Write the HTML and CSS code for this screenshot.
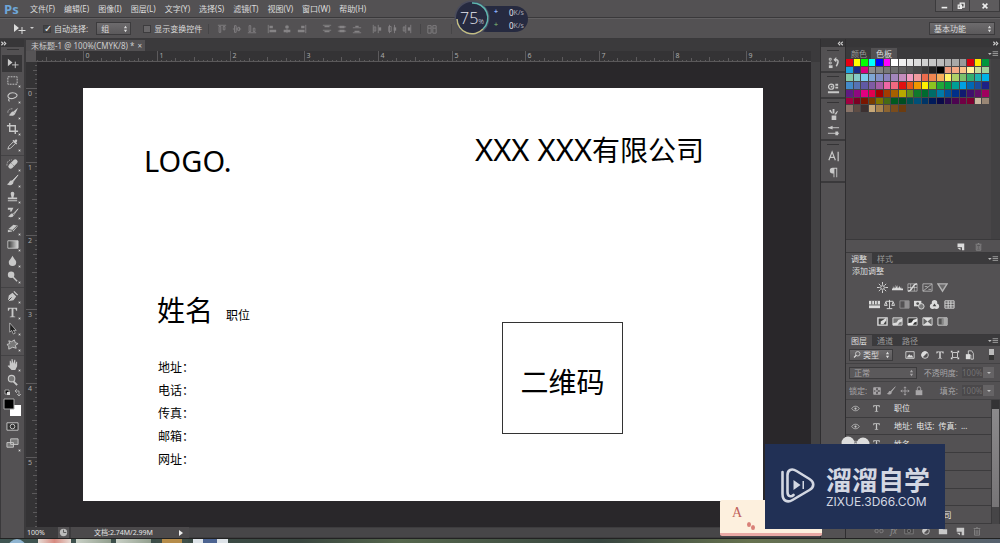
FILE: index.html
```html
<!DOCTYPE html>
<html lang="zh-CN">
<head>
<meta charset="utf-8">
<title>未标题-1 @ 100%(CMYK/8)</title>
<link rel="stylesheet" href="styles.css">
</head>
<body>
<svg class="defs" aria-hidden="true">
  <symbol id="move" viewBox="0 0 14 14"><path d="M2 2v8l5-4z" fill="currentColor"/><path d="M10 5v7M6.500 8.500h7" stroke="currentColor"/></symbol>
  <symbol id="marquee" viewBox="0 0 14 14"><path d="M2 3h10v8H2z" fill="none" stroke="currentColor" stroke-dasharray="2 1"/></symbol>
  <symbol id="lasso" viewBox="0 0 14 14"><path d="M4 9C0 7 3 3 7 3s7 3 3 5-6 1-6 1c-2 1-1 3 0 3" fill="none" stroke="currentColor" stroke-width="1.200"/></symbol>
  <symbol id="quick" viewBox="0 0 14 14"><path d="M13 2 8 6l2 2z" fill="currentColor"/><path d="M8 6c-3 0-3 3-5 4 3 1 6 1 7-2z" fill="currentColor"/><path d="M2 7c0-3 2-4 5-4" fill="none" stroke="currentColor" stroke-dasharray="1 1"/></symbol>
  <symbol id="crop" viewBox="0 0 14 14"><path d="M4 1v9h9M1 4h9v9" fill="none" stroke="currentColor" stroke-width="1.500"/></symbol>
  <symbol id="dropper" viewBox="0 0 14 14"><path d="m2 12 1-3 5-5 2 2-5 5z" fill="none" stroke="currentColor"/><path d="m7 3 4 4 1-1-1-1c2-2 1-4-1-3L9 3 8 2z" fill="currentColor"/></symbol>
  <symbol id="heal" viewBox="0 0 14 14"><path d="m5 9 5-5" stroke="currentColor" stroke-width="5" stroke-linecap="round"/><path d="m6 6 3 3" stroke="#555" stroke-dasharray="1 1"/><path d="M1 8c0-4 2-6 5-6" fill="none" stroke="currentColor" stroke-dasharray="1 1"/></symbol>
  <symbol id="brush" viewBox="0 0 14 14"><path d="M13 1 6 8l1 1z" fill="currentColor" stroke="currentColor"/><path d="M6 7c-3 0-2 3-5 4 3 2 7 1 7-2z" fill="currentColor"/></symbol>
  <symbol id="stamp" viewBox="0 0 14 14"><path d="M5 4a2 2 0 0 1 4 0L8 8h4v2H2V8h4zM2 11h10v1H2z" fill="currentColor"/></symbol>
  <symbol id="history" viewBox="0 0 14 14"><path d="M13 3 7 9l1 1z" stroke="currentColor"/><path d="M7 8c-3 0-3 3-5 3 3 2 6 1 6-1zM2 2h6L6 6H4l1-2H2z" fill="currentColor"/></symbol>
  <symbol id="eraser" viewBox="0 0 14 14"><path d="m2 8 6-5 5 1-5 6-6 1z" fill="currentColor"/><path d="m2 8 5 1 5-5M7 9v2" fill="none" stroke="#555"/></symbol>
  <symbol id="gradient" viewBox="0 0 14 14"><linearGradient id="g"><stop stop-color="#333"/><stop offset="1" stop-color="#ddd"/></linearGradient><path d="M2 3h11v8H2z" fill="url(#g)" stroke="currentColor"/></symbol>
  <symbol id="drop" viewBox="0 0 14 14"><path d="M7 2c2 4 4 5 4 7a4 4 0 0 1-8 0c0-2 2-3 4-7z" fill="currentColor"/></symbol>
  <symbol id="dodge" viewBox="0 0 14 14"><circle cx="5.500" cy="5" r="3.500" fill="currentColor"/><path d="m7 7 5 5" stroke="currentColor" stroke-width="1.500"/></symbol>
  <symbol id="pen" viewBox="0 0 14 14"><path d="m2 12 1-6 4-3 4 4-3 4zM8 2l1-1 4 4-1 1z" fill="currentColor"/><path d="m2 12 4-4" stroke="#444"/></symbol>
  <symbol id="type" viewBox="0 0 14 14"><path d="M2 2h10v3h-1L10 3H8v8l2 .5v.5H4v-.5L6 11V3H4L3 5H2z" fill="currentColor"/></symbol>
  <symbol id="arrow" viewBox="0 0 14 14"><path d="M4 1v10l2-2 2 4 2-1-2-3h3z" fill="#222" stroke="currentColor" stroke-width=".8"/></symbol>
  <symbol id="shape" viewBox="0 0 14 14"><path d="m3 3 3 1 3-2 1 3 3 1-3 2 1 3-4-1-4 2V9L1 7l3-1z" fill="#777" stroke="currentColor"/></symbol>
  <symbol id="hand" viewBox="0 0 14 14"><path d="M4 8V3h1l1 3V1h1l1 5 1-4h1v5l1-3h1v5l-2 4H6L2 9V8z" fill="currentColor"/></symbol>
  <symbol id="zoomer" viewBox="0 0 14 14"><circle cx="6" cy="5" r="3.500" fill="#777" stroke="currentColor" stroke-width="1.200"/><path d="m8 8 4 4" stroke="currentColor" stroke-width="2"/></symbol>
  <symbol id="mask" viewBox="0 0 14 14"><path d="M1 3h12v8H1z" fill="#333" stroke="currentColor"/><circle cx="7" cy="7" r="2.500" fill="none" stroke="currentColor"/></symbol>
  <symbol id="screen" viewBox="0 0 14 14"><path d="M5 2h8v6H5zM1 6h7v5H1z" fill="#777" stroke="currentColor"/></symbol>
  <symbol id="al-top" viewBox="0 0 12 12"><path d="M1 1.500h10M2.500 3v7h2V3zM7.500 3v4h2V3z" fill="none" stroke="currentColor"/></symbol>
  <symbol id="al-mid" viewBox="0 0 12 12"><path d="M1 6h2M5 6h2M9 6h2M3 2v8h2V2zM7 4v4h2V4z" fill="none" stroke="currentColor"/></symbol>
  <symbol id="al-bot" viewBox="0 0 12 12"><path d="M1 10.500h10M2.500 2v7h2V2zM7.500 5v4h2V5z" fill="none" stroke="currentColor"/></symbol>
  <symbol id="al-l" viewBox="0 0 12 12"><path d="M1.500 1v10" stroke="currentColor"/><path d="M3 2h4v3H3zM3 7h8v3H3z" fill="currentColor"/></symbol>
  <symbol id="al-c" viewBox="0 0 12 12"><path d="M6 1v10" stroke="currentColor"/><path d="M4 2h4v3H4zM2 7h8v3H2z" fill="currentColor"/></symbol>
  <symbol id="al-r" viewBox="0 0 12 12"><path d="M10.500 1v10" stroke="currentColor"/><path d="M5 2h4v3H5zM1 7h8v3H1z" fill="currentColor"/></symbol>
  <symbol id="di-t" viewBox="0 0 12 12"><path d="M1 1.500h10M1 7.500h10" stroke="currentColor"/><path d="M3 2h6v2H3zM3 8h6v2H3z" fill="currentColor"/></symbol>
  <symbol id="di-m" viewBox="0 0 12 12"><path d="M1 3.500h10M1 8.500h10" stroke="currentColor"/><path d="M3 2h6v3H3zM3 7h6v3H3z" fill="currentColor"/></symbol>
  <symbol id="di-b" viewBox="0 0 12 12"><path d="M1 4.500h10M1 10.500h10" stroke="currentColor"/><path d="M4 2h4v2H4zM3 8h6v2H3z" fill="currentColor"/></symbol>
  <symbol id="di-l" viewBox="0 0 12 12"><path d="M1.500 1v10M7.500 1v10" stroke="currentColor"/><path d="M2.500 3.500h2v5h-2z" fill="none" stroke="currentColor"/><path d="M8 4h3v4H8z" fill="currentColor"/></symbol>
  <symbol id="di-c" viewBox="0 0 12 12"><path d="M3 1v10M9 1v10" stroke="currentColor"/><path d="M2 3h3v6H2z" fill="none" stroke="currentColor"/><path d="M8 4h3v4H8z" fill="currentColor"/></symbol>
  <symbol id="di-r" viewBox="0 0 12 12"><path d="M4.500 1v10M10.500 1v10" stroke="currentColor"/><path d="M1.500 3.500h2v5h-2z" fill="none" stroke="currentColor"/><path d="M7 4h3v4H7z" fill="currentColor"/></symbol>
  <symbol id="auto" viewBox="0 0 12 12"><path d="M1 2h4v3H1zM7 2h4v3H7zM1 5v6h4V5M7 5v6h4V5" fill="none" stroke="currentColor"/></symbol>
  <symbol id="menu" viewBox="0 0 12 8"><path d="M0 3h4L2 5z" fill="currentColor"/><path d="M5 1.500h6M5 3.500h6M5 5.500h6" stroke="currentColor" stroke-width=".8"/></symbol>
  <symbol id="right2" viewBox="0 0 8 8"><path d="m1 2 2 2-2 2M4 2l2 2-2 2" fill="none" stroke="currentColor" stroke-width="1.300"/></symbol>
  <symbol id="left2" viewBox="0 0 8 8"><path d="M3 2 1 4l2 2M6 2 4 4l2 2" fill="none" stroke="currentColor" stroke-width="1.300"/></symbol>
  <symbol id="hist-p" viewBox="0 0 14 14"><path d="M2.500 2.500h2v2h-2zM2.500 6.500h2v2h-2z" fill="none" stroke="currentColor"/><path d="M2 10h4v3H2z" fill="currentColor"/><path d="M8 4h2c3 0 2 4 0 7" fill="none" stroke="currentColor" stroke-width="1.600"/><path d="M7 4l3-3v6z" fill="currentColor"/></symbol>
  <symbol id="props" viewBox="0 0 14 14"><circle cx="4.500" cy="5" r="2.800" fill="none" stroke="currentColor" stroke-width="1.300"/><path d="M4 4h2v2H4zM9 2h3v2H9zM9 5h3v2H9zM1 10h12v2H1z" fill="currentColor"/></symbol>
  <symbol id="brushes" viewBox="0 0 14 14"><path d="M5 8h5v5H5zM6 1h2v5H6zM2 3l2-1 2 4H5zM12 3l-2 1-2 3h2z" fill="currentColor"/></symbol>
  <symbol id="presets" viewBox="0 0 14 14"><path d="M1 4h12M1 10h12" stroke="currentColor"/><path d="m1 4 5-2v4zM9 8h3v4H9z" fill="currentColor"/></symbol>
  <symbol id="chars" viewBox="0 0 14 14"><path d="m2 11 3.500-9L9 11M3 8h5M12 2v10" fill="none" stroke="currentColor" stroke-width="1.300"/></symbol>
  <symbol id="para" viewBox="0 0 14 14"><path d="M6 8a3 3 0 0 1 0-6h5v10h-1V3H8v9H7V8z" fill="currentColor"/></symbol>
  <symbol id="new" viewBox="0 0 12 12"><path d="M2 2h9v9H8V7H2z" fill="currentColor"/><path d="m2 8 4 0v3z" fill="currentColor"/></symbol>
  <symbol id="trash" viewBox="0 0 12 12"><path d="M2 3h8M5 2h2M3 4v7h6V4M5 5v5M7 5v5" fill="none" stroke="currentColor"/></symbol>
  <symbol id="sun" viewBox="0 0 12 12"><circle cx="6" cy="6" r="2" fill="none" stroke="currentColor"/><path d="M6 0v3M6 9v3M0 6h3M9 6h3M2 2l2 2M8 8l2 2M10 2 8 4M4 8l-2 2" stroke="currentColor"/></symbol>
  <symbol id="levels" viewBox="0 0 12 12"><path d="M0 9V7l1 0V5l1 2V4l1 3 1-1V3l2 4V3l1 4 1-3 1 3 1-2v2l2 0v2z" fill="currentColor"/></symbol>
  <symbol id="curves" viewBox="0 0 12 12"><path d="M1 2h10v8H1zM1 6h10M4 2v8M8 2v8" fill="none" stroke="currentColor" stroke-width=".6"/><path d="M1 10c6 0 4-8 10-8" fill="none" stroke="currentColor" stroke-width="1.500"/></symbol>
  <symbol id="expo" viewBox="0 0 12 12"><path d="M1 2h10v8H1zM1 10l10-8M3 5h3M7 8h3" fill="none" stroke="currentColor"/></symbol>
  <symbol id="vib" viewBox="0 0 12 12"><path d="M1 2h10l-5 8z" fill="#777" stroke="currentColor" stroke-width="1.500"/></symbol>
  <symbol id="hue" viewBox="0 0 12 12"><path d="M0 2h12v8H0z" fill="currentColor"/><path d="M3 2v4M6 2v4M9 2v4M0 6.500h12" stroke="#555"/></symbol>
  <symbol id="scale" viewBox="0 0 12 12"><path d="M6 1v9M3 10.500h6M2 2.500h8M2 3 .5 7h3zM10 3 8.500 7h3z" fill="none" stroke="currentColor"/></symbol>
  <symbol id="bw" viewBox="0 0 12 12"><path d="M1 2h10v8H1z" fill="none" stroke="currentColor"/><path d="M6 2h5v8H6z" fill="currentColor"/></symbol>
  <symbol id="photo" viewBox="0 0 12 12"><path d="M0 2h8v6H0z" fill="currentColor"/><circle cx="8" cy="8" r="3" fill="#777" stroke="currentColor"/><circle cx="4" cy="5" r="1.500" fill="#555"/></symbol>
  <symbol id="mixer" viewBox="0 0 12 12"><circle cx="6" cy="4" r="3" fill="currentColor"/><circle cx="4" cy="8" r="3" fill="currentColor"/><circle cx="8" cy="8" r="3" fill="currentColor"/><path d="m6 5 2 3H4z" fill="#444"/></symbol>
  <symbol id="lut" viewBox="0 0 12 12"><path d="M1 2h10v8H1zM1 4.500h10M1 7.500h10M4.500 2v8M7.500 2v8" fill="none" stroke="currentColor"/></symbol>
  <symbol id="inv" viewBox="0 0 12 12"><path d="M1 2h10v8H1z" fill="#444" stroke="currentColor" stroke-width="1.500"/><path d="M4 9V6l3-2 3-2v3L7 9z" fill="currentColor"/></symbol>
  <symbol id="post" viewBox="0 0 12 12"><path d="M1 2h10v8H1z" fill="#777" stroke="currentColor"/><path d="m1 8 4-1 2-3 4-1v3L8 7l-2 3H1z" fill="currentColor"/></symbol>
  <symbol id="thresh" viewBox="0 0 12 12"><path d="M1 2h10v8H1z" fill="#333" stroke="currentColor"/><path d="m1 8 4-1 2-3 4-1v3L8 7l-2 3H1z" fill="#eee"/></symbol>
  <symbol id="sel" viewBox="0 0 12 12"><path d="M1 2h10v8H1z" fill="#666" stroke="currentColor"/><path d="m1 2 5 4 5-4M1 10l5-4 5 4z" fill="currentColor"/></symbol>
  <symbol id="gmap" viewBox="0 0 12 12"><path d="M1 2h10v8H1z" fill="#555" stroke="currentColor"/><path d="M5 2h2v8H5z" fill="#888"/><path d="M7 2h4v8H7z" fill="#aaa"/></symbol>
  <symbol id="pic" viewBox="0 0 12 12"><path d="M1 2h10v8H1z" fill="none" stroke="currentColor"/><path d="m2 9 3-4 2 2 1-1 2 3z" fill="currentColor"/></symbol>
  <symbol id="half" viewBox="0 0 12 12"><circle cx="6" cy="6" r="4" fill="none" stroke="currentColor"/><path d="M9 3a4 4 0 0 0-6 6z" fill="currentColor"/></symbol>
  <symbol id="frame" viewBox="0 0 12 12"><path d="M3 3h6v6H3z" fill="none" stroke="currentColor"/><path d="M1 1h2v2H1zM9 1h2v2H9zM1 9h2v2H1zM9 9h2v2H9z" fill="currentColor"/></symbol>
  <symbol id="smart" viewBox="0 0 12 12"><path d="M4 1h4l2 3v7H7V6H4z" fill="none" stroke="currentColor"/><path d="M1 5h5v6H1z" fill="currentColor"/></symbol>
  <symbol id="checker" viewBox="0 0 12 12"><path d="M2 2h8v8H2z" fill="none" stroke="currentColor"/><path d="M2 2h3v3H2zM7 2h3v3H7zM4 5h3v2H4zM2 7h3v3H2zM7 7h3v3H7z" fill="currentColor"/></symbol>
  <symbol id="lock" viewBox="0 0 12 12"><path d="M2 5h8v6H2z" fill="currentColor"/><path d="M4 5V3a2 2 0 0 1 4 0v2" fill="none" stroke="currentColor"/></symbol>
  <symbol id="cross" viewBox="0 0 12 12"><path d="M6 1v10M1 6h10M4.500 2.500 6 1l1.500 1.500M4.500 9.500 6 11l1.500-1.500M2.500 4.500 1 6l1.500 1.500M9.500 4.500 11 6 9.500 7.500" fill="none" stroke="currentColor"/></symbol>
  <symbol id="eye" viewBox="0 0 12 12"><path d="M1 6c2-4 8-4 10 0-2 4-8 4-10 0z" fill="none" stroke="currentColor"/><circle cx="6" cy="6" r="1.500" fill="currentColor"/></symbol>
  <symbol id="link" viewBox="0 0 12 12"><path d="M5 4H3a2 2 0 0 0 0 4h2M7 4h2a2 2 0 0 1 0 4H7M4 6h4" fill="none" stroke="currentColor"/></symbol>
  <symbol id="folder" viewBox="0 0 12 12"><path d="M1 3h4l1 1h5v6H1z" fill="currentColor"/></symbol>
  <symbol id="lens" viewBox="0 0 12 12"><circle cx="7" cy="5" r="3" fill="none" stroke="currentColor"/><path d="m5 7-3 3" stroke="currentColor" stroke-width="1.500"/></symbol>
  <symbol id="ud" viewBox="0 0 6 10"><path d="m1 4 2-3 2 3zM1 6l2 3 2-3z" fill="currentColor"/></symbol>
</svg>

<div class="app">
  <header class="menubar">
    <span class="logo">Ps</span>
    <nav class="menus">
      <button>文件(F)</button><button>编辑(E)</button><button>图像(I)</button><button>图层(L)</button><button>文字(Y)</button><button>选择(S)</button><button>滤镜(T)</button><button>视图(V)</button><button>窗口(W)</button><button>帮助(H)</button>
    </nav>
    <div class="window-buttons">
      <button aria-label="最小化"><svg viewBox="0 0 10 10"><path d="M2 7h7" stroke="currentColor" stroke-width="2"/></svg></button>
      <button aria-label="还原"><svg viewBox="0 0 10 10"><path d="M4 1.500h5v5H4zM1.500 4h4v4h-4z" fill="#555" stroke="currentColor" stroke-width="1.500"/></svg></button>
      <button class="close" aria-label="关闭"><svg viewBox="0 0 10 10"><path d="m2 2 6 6M8 2 2 8" stroke="currentColor" stroke-width="2"/></svg></button>
    </div>
  </header>

  <div class="options">
    <span class="current"><svg class="i14"><use href="#move"/></svg><i class="caret"></i></span>
    <label class="check"><input type="checkbox" checked>自动选择:</label>
    <span class="pick group"><select aria-label="自动选择"><option>组</option></select><svg><use href="#ud"/></svg></span>
    <label class="check"><input type="checkbox">显示变换控件</label>
    <div class="aligns">
      <span><svg><use href="#al-top"/></svg><svg><use href="#al-mid"/></svg><svg><use href="#al-bot"/></svg></span>
      <span><svg><use href="#al-l"/></svg><svg><use href="#al-c"/></svg><svg><use href="#al-r"/></svg></span>
      <span class="apart"><svg><use href="#di-t"/></svg><svg><use href="#di-m"/></svg><svg><use href="#di-b"/></svg></span>
      <span><svg><use href="#di-l"/></svg><svg><use href="#di-c"/></svg><svg><use href="#di-r"/></svg></span>
      <span><svg><use href="#auto"/></svg></span>
    </div>
    <span class="pick workspace"><select aria-label="工作区"><option>基本功能</option></select><svg><use href="#ud"/></svg></span>
  </div>

  <main class="main">
    <aside class="tools">
      <div class="strip-head left"><svg><use href="#right2"/></svg></div>
      <i class="grip"></i>
      <div class="tool-group">
        <button class="active" aria-label="移动"><svg><use href="#move"/></svg></button>
        <button aria-label="选框"><svg><use href="#marquee"/></svg></button>
        <button aria-label="套索"><svg><use href="#lasso"/></svg></button>
        <button aria-label="快速选择"><svg><use href="#quick"/></svg></button>
        <button aria-label="裁剪"><svg><use href="#crop"/></svg></button>
        <button aria-label="吸管"><svg><use href="#dropper"/></svg></button>
      </div>
      <div class="tool-group">
        <button aria-label="修复"><svg><use href="#heal"/></svg></button>
        <button aria-label="画笔"><svg><use href="#brush"/></svg></button>
        <button aria-label="图章"><svg><use href="#stamp"/></svg></button>
        <button aria-label="历史画笔"><svg><use href="#history"/></svg></button>
        <button aria-label="橡皮擦"><svg><use href="#eraser"/></svg></button>
        <button aria-label="渐变"><svg><use href="#gradient"/></svg></button>
        <button aria-label="模糊"><svg><use href="#drop"/></svg></button>
        <button aria-label="减淡"><svg><use href="#dodge"/></svg></button>
      </div>
      <div class="tool-group">
        <button aria-label="钢笔"><svg><use href="#pen"/></svg></button>
        <button aria-label="文字"><svg><use href="#type"/></svg></button>
        <button aria-label="路径选择"><svg><use href="#arrow"/></svg></button>
        <button aria-label="形状"><svg><use href="#shape"/></svg></button>
      </div>
      <div class="tool-group last">
        <button aria-label="抓手"><svg><use href="#hand"/></svg></button>
        <button class="single" aria-label="缩放"><svg><use href="#zoomer"/></svg></button>
      </div>
      <svg class="colors" viewBox="0 0 20 30"><path d="M3 2h4v4H3z" fill="#111" stroke="#bbb" stroke-width=".8"/><path d="M5 4h3v3H5z" fill="#ddd"/><path d="M13 3h4v5M13 3l2-2M13 3l2 2M17 8l-2-2M17 8l2-2" fill="none" stroke="#bbb" stroke-width=".8"/><path d="M8 17h11v11H8z" fill="#fff"/><path d="M2 11h10v10H2z" fill="#000" stroke="#aaa"/></svg>
      <button class="single wide" aria-label="快速蒙版"><svg><use href="#mask"/></svg></button>
      <button class="wide" aria-label="屏幕模式"><svg><use href="#screen"/></svg></button>
    </aside>

    <section class="document">
      <div class="doc-tabs"><div class="doc-tab">未标题-1 @ 100%(CMYK/8) *<button aria-label="关闭文档">×</button></div></div>
      <div class="ruler-row"><i class="corner"></i><svg class="ruler-x" id="ruler-x"></svg></div>
      <div class="view">
        <svg class="ruler-y" id="ruler-y"></svg>
        <div class="canvas">
          <div class="card">
            <span class="t-logo">LOGO.</span>
            <span class="t-company"><span class="latin">XXX XXX</span>有限公司</span>
            <span class="t-name">姓名</span>
            <span class="t-job">职位</span>
            <ul class="t-lines"><li>地址：</li><li>电话：</li><li>传真：</li><li>邮箱：</li><li>网址：</li></ul>
            <div class="t-qr">二维码</div>
          </div>
        </div>
        <i class="scroll-y"></i>
      </div>
      <footer class="status">
        <span class="zoom">100%</span>
        <svg class="status-icon" viewBox="0 0 12 12"><circle cx="6" cy="6" r="4" fill="#bbb"/><path d="M6 3v3h3" fill="none" stroke="#555"/></svg>
        <span class="size">文档:2.74M/2.99M</span><i class="play"></i>
        <i class="scroll-x"></i>
      </footer>
    </section>

    <aside class="dock">
      <div class="strip-head"><svg><use href="#left2"/></svg></div>
      <div class="dock-group"><i class="grip"></i><svg><use href="#hist-p"/></svg></div>
      <div class="dock-group"><i class="grip"></i><svg><use href="#props"/></svg></div>
      <div class="dock-group"><i class="grip"></i><svg><use href="#brushes"/></svg><svg><use href="#presets"/></svg></div>
      <div class="dock-group"><i class="grip"></i><svg><use href="#chars"/></svg><svg><use href="#para"/></svg></div>
    </aside>

    <aside class="panels">
      <div class="strip-head"><svg><use href="#right2"/></svg></div>
      <section class="panel swatch-panel">
        <div class="tabs"><button>颜色</button><button class="on">色板</button><svg><use href="#menu"/></svg></div>
        <div class="swatch-body"><div class="swatches" id="swatches"></div></div>
        <div class="panel-foot"><svg><use href="#new"/></svg><svg class="dim"><use href="#trash"/></svg></div>
      </section>
      <section class="panel">
        <div class="tabs"><button class="on">调整</button><button>样式</button><svg><use href="#menu"/></svg></div>
        <div class="adjust">
          <h2>添加调整</h2>
          <div><svg><use href="#sun"/></svg><svg><use href="#levels"/></svg><svg><use href="#curves"/></svg><svg class="soft"><use href="#expo"/></svg><svg class="soft"><use href="#vib"/></svg></div>
          <div><svg><use href="#hue"/></svg><svg><use href="#scale"/></svg><svg class="dim"><use href="#bw"/></svg><svg><use href="#photo"/></svg><svg><use href="#mixer"/></svg><svg><use href="#lut"/></svg></div>
          <div><svg><use href="#inv"/></svg><svg><use href="#post"/></svg><svg><use href="#thresh"/></svg><svg><use href="#sel"/></svg><svg><use href="#gmap"/></svg></div>
        </div>
      </section>
      <section class="panel layers">
        <div class="tabs"><button class="on">图层</button><button>通道</button><button>路径</button><svg><use href="#menu"/></svg></div>
        <div class="row">
          <span class="pick kind"><svg class="lead"><use href="#lens"/></svg><select aria-label="筛选"><option>类型</option></select><svg><use href="#ud"/></svg></span>
          <div class="filters"><svg><use href="#pic"/></svg><svg><use href="#half"/></svg><svg><use href="#type"/></svg><svg><use href="#frame"/></svg><svg><use href="#smart"/></svg></div>
          <i class="toggle"></i>
        </div>
        <div class="row muted">
          <span class="pick blend"><select aria-label="混合模式"><option>正常</option></select><svg><use href="#ud"/></svg></span>
          <label>不透明度:<input value="100%" disabled></label><i class="drop"></i>
        </div>
        <div class="row muted">
          <span>锁定:</span>
          <div class="locks"><svg><use href="#checker"/></svg><svg><use href="#brush"/></svg><svg><use href="#cross"/></svg><svg><use href="#lock"/></svg></div>
          <label>填充:<input value="100%" disabled></label><i class="drop"></i>
        </div>
        <div class="list-wrap">
          <ul class="list">
            <li><svg><use href="#eye"/></svg><svg class="t"><use href="#type"/></svg><span>职位</span></li>
            <li><svg><use href="#eye"/></svg><svg class="t"><use href="#type"/></svg><span>地址:&nbsp; 电话:&nbsp; 传真:&nbsp; ...</span></li>
            <li><svg><use href="#eye"/></svg><svg class="t"><use href="#type"/></svg><span>姓名</span></li>
            <li></li><li></li><li></li>
            <li><svg><use href="#eye"/></svg><svg class="t"><use href="#type"/></svg><span>XXX XX有限公司</span></li>
          </ul>
          <i class="scroll-l"></i>
        </div>
        <div class="layer-foot"><svg class="dim"><use href="#link"/></svg><em>fx</em><svg class="dim"><use href="#mask"/></svg><svg><use href="#half"/></svg><svg><use href="#folder"/></svg><svg><use href="#new"/></svg><svg class="dim"><use href="#trash"/></svg></div>
      </section>
    </aside>
  </main>
  <div class="taskbar"><i class="orb"></i><i class="task a"></i><i class="task b"></i><i class="task b"></i><i class="task c"></i><i class="task d"></i></div>
</div>

<div class="meter">
  <div class="speeds"><span><b class="up">+</b>0<small>K/s</small></span><span><b class="down">+</b>0<small>K/s</small></span></div>
  <div class="dial">
    <svg viewBox="0 0 36 36"><circle cx="18" cy="18" r="17.500" fill="#4a4c5c"/><circle cx="18" cy="18" r="16" fill="#262a40"/><path d="M18 3a15 15 0 0 1 11 26" fill="none" stroke="#5fb6b0" stroke-width="1.500"/><path d="M29 29A15 15 0 0 1 3 19" fill="none" stroke="#c3bd83" stroke-width="1.500"/></svg>
    <span>75<small>%</small></span>
  </div>
</div>
<div class="ime"><b>A</b><i></i><i></i></div>
<svg class="paws" viewBox="0 0 30 12"><circle cx="7" cy="7" r="6.500" fill="#ddd"/><circle cx="22" cy="8" r="6.500" fill="#ddd"/></svg>
<div class="watermark">
  <svg viewBox="0 0 34 36"><g fill="none" stroke="#d3d7e2" stroke-linecap="round" stroke-linejoin="round"><path d="M2 5v22c0 7 5 9 10 6l17-10c5-3 5-8 0-11L16 4C11 1 7 3 7 8v17c0 5 4 5 6 3" stroke-width="2.600"/></g><path d="m13 13 7 5-7 5zM22 14h1.500v8H22z" fill="#d3d7e2"/></svg>
  <div><strong>溜溜自学</strong><span>ZIXUE.3D66.COM</span></div>
</div>
<script src="script.js"></script>
</body>
</html>
```
FILE: styles.css
```css
* { box-sizing: border-box; }
body {
  margin: 0;
  overflow: hidden;
  background: #535153;
  color: #dcdcdc;
  font: 8px/12px "Noto Sans", "Noto Sans CJK SC", sans-serif;
}
button, select, input { font: inherit; color: inherit; background: none; border: 0; padding: 0; margin: 0; }
svg { display: block; flex: none; }
ul { list-style: none; margin: 0; padding: 0; }
h2 { margin: 0; font: inherit; }
.defs { position: absolute; width: 0; height: 0; }
.app { height: 100vh; display: flex; flex-direction: column; }
.dim { opacity: .45; }
.soft { opacity: .7; }

.menubar { height: 18px; flex: none; display: flex; align-items: center; border-bottom: 1px solid #3a393b; }
.logo { width: 30px; padding-left: 4px; font: bold 13px/16px "Open Sans", sans-serif; color: #6ea6d8; }
.menus { display: flex; gap: 9px; }
.menus button { white-space: nowrap; }
.window-buttons { margin-left: auto; align-self: flex-start; display: flex; border: 1px solid #3c3b3d; border-top: 0; background: #5d5b5d; }
.window-buttons button { width: 17px; height: 11px; display: grid; place-items: center; border-right: 1px solid #3c3b3d; color: #eee; }
.window-buttons .close { width: 29px; border-right: 0; }
.window-buttons svg { width: 8px; height: 8px; }

.options { height: 21px; flex: none; display: flex; align-items: center; padding: 0 5px 0 12px; border-top: 1px solid #626062; border-bottom: 1px solid #3a393b; }
.current { display: flex; align-items: center; gap: 4px; width: 31px; }
.i14 { width: 14px; height: 14px; }
.caret { border: 2px solid transparent; border-top-color: #ccc; }
.check { display: flex; align-items: center; gap: 3px; white-space: nowrap; }
.check input { appearance: none; width: 8px; height: 8px; background: #686668; border: 1px solid #3d3c3e; }
.check input:checked { background: #444; }
.check input:checked::after { content: "✓"; display: block; font: bold 10px/6px "DejaVu Sans", sans-serif; color: #eee; }
.pick { display: flex; align-items: center; border: 1px solid #3c3b3d; background: linear-gradient(#6d6b6d, #5b595b); }
.pick select { appearance: none; flex: 1; min-width: 0; padding: 0 4px; line-height: 10px; outline: 0; }
.pick svg { width: 5px; height: 8px; margin-right: 2px; }
.group { width: 35px; height: 13px; margin: 0 12px 0 8px; }
.workspace { width: 66px; height: 13px; margin-left: auto; }
.aligns { display: flex; margin-left: 6px; color: #858385; border: solid #464547; border-width: 0 1px; }
.aligns span { display: flex; gap: 5px; padding: 0 5px; }
.aligns span:first-child { padding-left: 8px; }
.aligns .apart { padding-left: 10px; }
.aligns span:last-child { margin-left: 3px; border-left: 1px solid #464547; padding: 0 14px 0 6px; }
.aligns svg { width: 10px; height: 10px; }

.main { flex: 1; min-height: 0; display: flex; background: #3b3a3c; }
.strip-head { height: 8px; flex: none; display: flex; justify-content: flex-end; align-items: center; background: #373638; color: #ccc; }
.strip-head.left { justify-content: flex-start; }
.strip-head svg { width: 8px; height: 7px; }
.grip { display: block; width: 12px; height: 1px; margin: 2px auto; background: #353436; }

.tools { width: 24px; flex: none; background: #535153; color: #c8c8c8; border-left: 1px solid #3a393b; display: flex; flex-direction: column; }
.tools .strip-head { margin-left: -1px; }
.tools .grip { margin-bottom: 5px; }
.tool-group { padding-bottom: 3px; border-bottom: 1px solid #434244; }
.tool-group.last { border: 0; padding-bottom: 0; }
.tools button { position: relative; display: grid; place-items: center; width: 20px; height: 16px; margin: 0 auto 0 1px; }
.tools .tool-group .active { background: #373638; height: 17px; }
.tools button svg { width: 13px; height: 13px; }
.tools button::after { content: ""; position: absolute; right: 2px; bottom: 1px; width: 1px; height: 1px; background: #ddd; outline: 1px solid #8888; }
.tools .active::after, .tools .single::after { display: none; }
.colors { width: 20px; height: 30px; margin-left: 1px; }
.tools .wide { height: 17px; }

.document { flex: 1; min-width: 0; display: flex; flex-direction: column; padding-left: 2px; }
.doc-tabs { height: 12px; flex: none; display: flex; padding-top: 1px; }
.doc-tab { display: flex; gap: 3px; padding: 0 3px 0 5px; background: #525052; line-height: 11px; color: #ccc; white-space: nowrap; }
.ruler-row { height: 11px; flex: none; display: flex; }
.corner { width: 10px; background: #565456; }
.ruler-x { flex: 1; width: 0; height: 11px; margin-right: 9px; background: #343335; border-bottom: 1px solid #5a585a; }
.view { flex: 1; min-height: 0; display: flex; }
.ruler-y { width: 11px; height: 100%; background: #343335; }
.ruler-x line, .ruler-y line { stroke: #5c5a5c; }
.ruler-x text, .ruler-y text { font: 7px "Noto Sans", sans-serif; fill: #aaa; }
.canvas { flex: 1; min-width: 0; background: #29272a; padding: 26px 48px 26px 46px; display: flex; }
.scroll-y { width: 9px; background: #434244; }
.card { position: relative; flex: 1; background: #fff; color: #000; white-space: nowrap; }
.card > * { position: absolute; }
.t-logo { left: 61px; top: 55px; font-size: 29px; line-height: 36px; }
.t-company { left: 392px; top: 43px; font-size: 28px; line-height: 36px; }
.latin { font-size: 31px; }
.t-name { left: 74px; top: 204px; font-size: 28px; line-height: 36px; }
.t-job { left: 143px; top: 219px; font-size: 12px; line-height: 18px; }
.t-lines { left: 75px; top: 268px; font-size: 12px; line-height: 23px; }
.t-qr { left: 419px; top: 234px; width: 121px; height: 112px; border: 1px solid #333; display: grid; place-items: center; padding-top: 8px; font-size: 28px; line-height: 36px; }
.status { height: 11px; flex: none; display: flex; align-items: center; background: #3d3c3e; color: #e4e4e4; font-size: 7px; line-height: 11px; white-space: nowrap; }
.zoom { width: 32px; padding-left: 1px; }
.status-icon { width: 11px; height: 11px; background: #565456; }
.size { flex: none; width: 86px; margin-left: 2px; padding-left: 23px; background: #4b494b; }
.play { width: 32px; height: 11px; background: #4b494b; display: flex; align-items: center; }
.play::after { content: ""; margin-left: 22px; border: 3px solid transparent; border-left: 4px solid #eee; border-right: 0; }
.scroll-x { flex: 1; height: 9px; background: #474648; }

.dock { width: 25px; flex: none; background: #535153; border-left: 1px solid #2f2e30; color: #c8c8c8; }
.dock-group { padding: 1px 0 2px; border-bottom: 2px solid #3a393b; display: grid; justify-items: center; gap: 3px; }
.dock-group svg { width: 13px; height: 13px; }

.panels { width: 155px; flex: none; background: #3a393b; border-left: 1px solid #2f2e30; display: flex; flex-direction: column; gap: 1px; }
.panel { background: #535153; flex: none; }
.tabs { display: flex; height: 11px; background: #3b3a3c; color: #999; line-height: 11px; }
.tabs button { padding: 0 4px 0 5px; line-height: 11px; white-space: nowrap; }
.tabs .on { background: #535153; color: #ddd; padding: 0 5px; }
.tabs svg { width: 11px; height: 8px; margin: 2px 1px 0 auto; color: #bbb; }
.swatch-panel { flex: 1; min-height: 60px; display: flex; flex-direction: column; }
.swatch-body { flex: 1; background: #484648; border-right: 9px solid #424143; }
.swatches { width: 143px; height: 53px; display: grid; grid-template-columns: repeat(19, 1fr); grid-template-rows: repeat(7, 1fr); gap: 1px; background: #484648; }
.panel-foot { height: 13px; display: flex; justify-content: flex-end; align-items: center; gap: 9px; padding-right: 17px; border-top: 1px solid #3a393b; }
.panel-foot svg { width: 9px; height: 9px; }
.adjust { height: 70px; padding: 1px 6px; }
.adjust h2 { margin-bottom: 2px; }
.adjust div { display: flex; justify-content: center; gap: 4px; height: 17px; align-items: center; padding-right: 22px; }
.adjust svg { width: 11px; height: 11px; }
.row { height: 18px; display: flex; align-items: center; padding: 0 6px 0 3px; border-bottom: 1px solid #434244; }
.row.muted { color: #a8a6a8; }
.kind { width: 44px; height: 12px; }
.kind .lead { width: 10px; height: 9px; margin: 0 0 0 2px; }
.kind select { padding: 0 1px; }
.filters { display: flex; gap: 5px; margin-left: 12px; }
.filters svg { width: 10px; height: 10px; }
.toggle { width: 5px; height: 11px; margin-left: auto; background: linear-gradient(#bbb 50%, #333 50%); }
.blend { width: 68px; height: 12px; background: #5b595b; }
.row label { display: flex; align-items: center; gap: 4px; margin-left: auto; white-space: nowrap; }
.row input { width: 21px; height: 11px; background: #4a484a; color: #737173; }
.drop { display: grid; place-items: center; width: 11px; height: 11px; background: #656365; }
.drop::after { content: ""; margin-top: 2px; border: 2px solid transparent; border-top-color: #bbb; }
.locks { display: flex; gap: 4px; margin-left: 5px; }
.locks svg { width: 10px; height: 10px; }
.list-wrap { display: flex; height: 124px; }
.list { flex: 1; display: grid; grid-template-rows: repeat(7, 1fr); }
.list li { display: flex; align-items: center; border-bottom: 1px solid #3c3b3d; white-space: nowrap; color: #e8e8e8; }
.list svg { width: 9px; height: 9px; margin-left: 5px; color: #c8c8c8; }
.list .t { margin: 0 13px 0 12px; }
.scroll-l { width: 9px; background: linear-gradient(#343335 9px, #8b898b 9px, #777577 86%, #464547 86%); border: solid #3a393b; border-width: 0 1px; }
.layer-foot { height: 14px; display: flex; align-items: center; justify-content: flex-end; gap: 7px; padding-right: 18px; color: #c8c8c8; }
.layer-foot svg { width: 10px; height: 10px; }
.layer-foot em { opacity: .5; }

.taskbar { height: 5px; flex: none; display: flex; gap: 5px; padding-left: 8px; overflow: hidden; border-top: 1px solid #222; background: linear-gradient(90deg, #3f5552, #39463f 30%, #55664c 40%, #37453f 60%, #66724f 75%, #56616e); }
.taskbar i { flex: none; }
.orb { width: 18px; height: 9px; border-radius: 9px 9px 0 0; background: #8fb4d0; margin-right: 7px; }
.task { width: 35px; height: 5px; background: #a9b5ad; }
.task.a { width: 33px; background: linear-gradient(90deg, #e6dcd5, #d68a80, #e6dcd5); }
.task.b { background: linear-gradient(90deg, #c9d0c6, #93a08f); }
.task.c { width: 32px; background: linear-gradient(90deg, #3f4f48 20%, #b58c4a 20%, #b58c4a 80%, #3f4f48 80%); }
.task.d { background: linear-gradient(90deg, #dde3e8 30%, #4b6390 30%, #4b6390 70%, #dde3e8 70%); }

.meter { position: absolute; left: 454px; top: 0; color: #e6e8f0; }
.dial { position: relative; width: 36px; height: 36px; }
.dial span { position: absolute; inset: 0; text-align: center; font: 300 16px/37px "Open Sans", sans-serif; }
.dial small { font-size: 7px; }
.speeds { position: absolute; left: 20px; top: 6px; width: 54px; height: 26px; border-radius: 13px; background: #262a40; padding: 1px 4px 0 20px; display: grid; font-size: 8px; line-height: 12px; }
.speeds span { display: flex; }
.speeds b { width: 15px; font-size: 7px; line-height: 10px; }
.speeds small { font-size: 7px; color: #a6a8b4; }
.speeds .up { color: #8fb6ff; }
.speeds .down { color: #6f9f6a; }

.ime { position: absolute; left: 720px; top: 500px; width: 102px; height: 36px; background: #fdf0de; border-bottom: 3px solid #e9a9a5; border-radius: 2px; padding: 2px 12px; display: flex; }
.ime b { width: 15px; font: 14px/22px "Liberation Serif", serif; color: #c0625c; }
.ime i { width: 4px; height: 5px; margin: 20px 0 0; border-radius: 50%; background: #d98078; }
.ime i + i { margin-top: 23px; }
.paws { position: absolute; left: 841px; top: 436px; width: 30px; height: 12px; }
.watermark { position: absolute; left: 765px; top: 444px; width: 180px; height: 85px; display: flex; gap: 11px; padding: 23px 0 0 15px; background: #213055; color: #d3d7e2; }
.watermark svg { width: 35px; height: 36px; }
.watermark div { display: grid; align-content: start; }
.watermark strong { font: bold 26px/28px "Liberation Sans", "Noto Sans CJK SC", sans-serif; }
.watermark span { font: 12px/14px Inter, sans-serif; }
```
FILE: script.js
```javascript
const NS = "http://www.w3.org/2000/svg";

function add(parent, name, attrs, text) {
  const el = document.createElementNS(NS, name);
  for (const key in attrs) el.setAttribute(key, attrs[key]);
  if (text !== undefined) el.textContent = text;
  parent.appendChild(el);
}

// One ruler unit is 73.7px wide and has sixteen divisions.
function drawRuler(id, vertical, origin, count) {
  const svg = document.getElementById(id);
  const step = 73.7 / 16;
  for (let i = -12; i < count * 16; i++) {
    const p = Math.round(origin + i * step) + 0.5;
    if (p < 0) continue;
    const from = i % 16 === 0 ? 0 : i % 8 === 0 ? 6 : i % 4 === 0 ? 7 : 9;
    add(svg, "line", vertical
      ? { x1: from, x2: 11, y1: p, y2: p }
      : { y1: from, y2: 11, x1: p, x2: p });
    if (i >= 0 && i % 16 === 0) {
      add(svg, "text", vertical ? { x: 2, y: p + 7 } : { x: p + 2, y: 7 }, i / 16);
    }
  }
}
drawRuler("ruler-x", false, 47, 10);
drawRuler("ruler-y", true, 26, 6);

const colors = `
e60012 ffff00 00ff00 00ffff 0000ff ff00ff ffffff f0f0f0 e6e6e6 dcdcdc d0d0d0 c6c6c6 bcbcbc b0b0b0 a8a8a8 999999 d7000f ffe600 00963c
1ea0e0 1e2c87 d8007f 8c8c8c 848484 777777 6c6c6c 606060 555555 484848 3a3a3a 222222 000000 ef9a7c f4a985 f9c38c fff3a0 c6dd9c a0d29b
86c9a5 84cbc8 7dcbee 7fa7d4 8190c6 8a82bc a286bb c48dbd f19cc0 f29b9e ec6b4c f08650 f6ae5c fff368 aed068 7cbf6c 33ae70 1cb3b1 00b2e8
438bca 5573b5 6059a3 7f5ba3 a65ea5 ee66a5 ef6980 e01010 e9551a f29600 fff000 8cc320 1fa838 009b44 009e96 00a0e5 0068b5 1b4c9c 1d2087
5f1a83 8f0780 e3007f e2004f a40000 a33c00 a56000 b7a800 628f1c 0f7a2c 006b2f 006c68 007aa8 00509a 00308a 101a70 40106c 600f68 a0005e
a30040 7c0022 7a1500 7a3c00 7e7500 466a14 005a20 004e22 005050 005078 003566 001a5a 0a0a48 2a0a4e 4c0550 700044 7c0030 c9b8a0 998675
8a7468 5e4c44 3c3030 c7a878 a88450 8c6430 7a4c1c 6c3c10`.trim().split(/\s+/);
const grid = document.getElementById("swatches");
for (const color of colors) {
  const cell = document.createElement("i");
  cell.style.background = "#" + color;
  grid.appendChild(cell);
}
```
